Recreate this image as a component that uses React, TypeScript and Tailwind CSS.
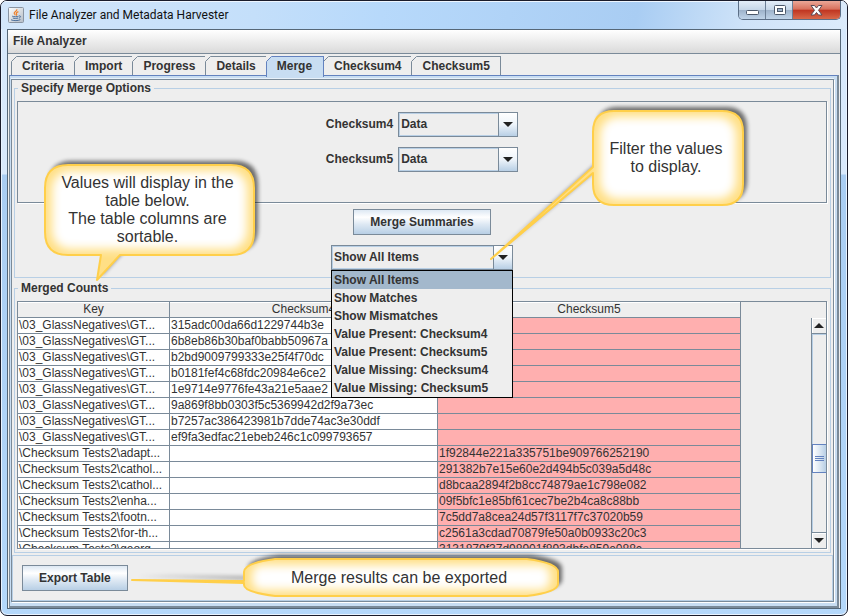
import React from "react";

const tabs = ["Criteria", "Import", "Progress", "Details", "Merge", "Checksum4", "Checksum5"];

const filters = [
  "Show All Items",
  "Show Matches",
  "Show Mismatches",
  "Value Present: Checksum4",
  "Value Present: Checksum5",
  "Value Missing: Checksum4",
  "Value Missing: Checksum5",
];

const glass = "\\03_GlassNegatives\\GT...";
const tests = "\\Checksum Tests2\\";

const rows: [string, string, string][] = [
  [glass, "315adc00da66d1229744b3e", ""],
  [glass, "6b8eb86b30baf0babb50967a", ""],
  [glass, "b2bd9009799333e25f4f70dc", ""],
  [glass, "b0181fef4c68fdc20984e6ce2", ""],
  [glass, "1e9714e9776fe43a21e5aae2", ""],
  [glass, "9a869f8bb0303f5c5369942d2f9a73ec", ""],
  [glass, "b7257ac386423981b7dde74ac3e30ddf", ""],
  [glass, "ef9fa3edfac21ebeb246c1c099793657", ""],
  [tests + "adapt...", "", "1f92844e221a335751be909766252190"],
  [tests + "cathol...", "", "291382b7e15e60e2d494b5c039a5d48c"],
  [tests + "cathol...", "", "d8bcaa2894f2b8cc74879ae1c798e082"],
  [tests + "enha...", "", "09f5bfc1e85bf61cec7be2b4ca8c88bb"],
  [tests + "footn...", "", "7c5dd7a8cea24d57f3117f7c37020b59"],
  [tests + "for-th...", "", "c2561a3cdad70879fe50a0b0933c20c3"],
  [tests + "georg...", "", "3131879f37d98901f893dbfa859e088c"],
];

function JavaIcon() {
  return (
    <svg width="16" height="16" viewBox="0 0 16 16" aria-hidden="true">
      <defs>
        <linearGradient id="java-bg" x1="0" y1="0" x2="1" y2="1">
          <stop offset="0" stopColor="#ffffff" />
          <stop offset="1" stopColor="#b4bcc6" />
        </linearGradient>
      </defs>
      <rect x="0.5" y="0.5" width="15" height="15" rx="1" fill="url(#java-bg)" stroke="#8a95a3" />
      <path d="M8.8 2.2C9.4 4 5.6 4.8 6.2 6.4c.3.8 1 1 1 1.8M10.4 4.6C8.2 5.4 8 6.4 8.6 7.2c.4.6.1 1-.4 1.4" fill="none" stroke="#f0802a" strokeWidth="1.2" />
      <path d="M4.2 9.2c1.6.7 5 .7 6.4 0M4.8 11c1.400.6 4 .6 5.200 0M3 12.800c2.400 1.200 7.600 1.100 9.400-.2M11 9c2-.6 2.200 1.400-.2 2.200" fill="none" stroke="#4b6f9c" />
    </svg>
  );
}

function Arrow({ up = false }: { up?: boolean }) {
  return (
    <svg width="10" height="5" viewBox="0 0 10 5" aria-hidden="true">
      <path d={up ? "M0 5 5 0l5 5z" : "M0 0h10L5 5z"} fill="#222" />
    </svg>
  );
}

function Combo({ id, options, wide = false }: { id: string; options: string[]; wide?: boolean }) {
  return (
    <div className={wide ? "relative w-[182px]" : "relative w-[120px]"}>
      <select
        id={id}
        aria-label={wide ? "Filter" : undefined}
        className="block h-[25px] w-full appearance-none border border-[#7a8a99] bg-[#eee] pl-[2px] pr-5 font-bold shadow-[inset_1px_1px_0_#b8cfe5,inset_0_-1px_0_#b8cfe5] outline-none"
      >
        {options.map((o) => (
          <option key={o}>{o}</option>
        ))}
      </select>
      <span className="pointer-events-none absolute inset-y-0 right-0 flex w-5 items-center justify-center border border-[#7a8a99] bg-linear-to-b from-white via-[#eef4fa] to-[#b8cfe5]">
        <Arrow />
      </span>
    </div>
  );
}

function PushButton({ children }: { children: React.ReactNode }) {
  return (
    <button className="h-[26px] border border-[#7a8a99] bg-[linear-gradient(#dde8f3,#ffffff_30%,#dde8f3_60%,#b8cfe5)] px-4 font-bold">
      {children}
    </button>
  );
}

function TabStrip() {
  return (
    <div role="tablist" className="flex h-[21px] items-start pl-[3px] pt-[2px]">
      {tabs.map((t, i) => {
        const selected = t === "Merge";
        const last = i === tabs.length - 1;
        const tone = selected
          ? "border-[#6382bf] border-r bg-[#c8ddf2] -mr-px z-20 h-[21px] pb-[2px] pr-[11px]"
          : "border-[#7a8a99] h-[19px] pr-[10px]";
        return (
          <button
            key={t}
            role="tab"
            aria-selected={selected}
            className={`relative border-l border-t pl-[10px] font-bold ${tone} ${last ? "border-r" : ""}`}
          >
            {t}
            <svg className="absolute -left-px -top-px" width="6" height="6" viewBox="0 0 6 6" aria-hidden="true">
              <path d="M0 0h6L0 6z" fill="#eee" />
              <path d="M0.500 5.500 5.500 0.500" stroke={selected ? "#6382bf" : "#7a8a99"} />
            </svg>
          </button>
        );
      })}
    </div>
  );
}

function WindowButtons() {
  return (
    <div className="flex h-[19px] overflow-hidden rounded-b-[5px] border border-t-0 border-[#5b6e86]">
      <button aria-label="Minimize" className="flex w-[27px] items-center justify-center border-r border-[#6c7f96] bg-[linear-gradient(#e3edf8,#c6d6e8_48%,#9db2ca_50%,#bfd3e8)]">
        <svg width="13" height="13" viewBox="0 0 13 13" aria-hidden="true">
          <rect x="0.500" y="6.500" width="12" height="4" rx="1" fill="#fff" stroke="#4c586a" />
        </svg>
      </button>
      <button aria-label="Maximize" className="flex w-[27px] items-center justify-center border-r border-[#6c7f96] bg-[linear-gradient(#e3edf8,#c6d6e8_48%,#9db2ca_50%,#bfd3e8)]">
        <svg width="13" height="13" viewBox="0 0 13 13" aria-hidden="true">
          <rect x="1.500" y="1.500" width="11" height="9" rx="1" fill="#fff" stroke="#4c586a" />
          <rect x="4.500" y="4.500" width="5" height="3" fill="#9db2ca" stroke="#4c586a" />
        </svg>
      </button>
      <button aria-label="Close" className="flex w-[47px] items-center justify-center bg-[linear-gradient(#eba797,#d8705c_46%,#bf3420_50%,#d8694a)]">
        <svg width="13" height="11" viewBox="0 0 13 11" aria-hidden="true">
          <path d="M1 .5h3.500l2 2.500 2-2.500H12L8.500 5.300 12 10H8.500l-2-2.500-2 2.500H1l3.500-4.700z" fill="#fff" stroke="#5a4a55" strokeLinejoin="round" />
        </svg>
      </button>
    </div>
  );
}

function ScrollBar() {
  return (
    <div className="flex w-[15px] flex-col border-l border-[#7a8a99] bg-[#eee]">
      <button aria-label="Scroll up" className="flex h-4 items-center justify-center border-b border-[#7a8a99] shadow-[inset_1px_1px_0_#fff]">
        <Arrow up />
      </button>
      <div className="flex flex-1 flex-col border-l border-t border-[#b8cfe5]">
        <div className="flex-[110]" />
        <div className="-ml-px flex h-[29px] flex-col items-center justify-center gap-px border-y border-l border-[#6382bf] bg-linear-to-r from-white via-[#dde8f3] to-[#b8cfe5]">
          <span className="h-px w-[9px] bg-[#6382bf]" />
          <span className="h-px w-[9px] bg-[#6382bf]" />
          <span className="h-px w-[9px] bg-[#6382bf]" />
        </div>
        <div className="flex-[59]" />
      </div>
      <button aria-label="Scroll down" className="flex h-4 items-center justify-center border-t border-[#7a8a99] shadow-[inset_1px_1px_0_#fff]">
        <Arrow />
      </button>
    </div>
  );
}

function Balloon({
  id,
  width,
  height,
  shape,
  glow,
  className,
}: {
  id: string;
  width: number;
  height: number;
  shape: string;
  glow: React.ReactNode;
  className: string;
}) {
  return (
    <svg className={`absolute overflow-visible ${className}`} width={width} height={height} viewBox={`0 0 ${width} ${height}`} aria-hidden="true">
      <defs>
        <filter id={`${id}-shadow`} x="-10%" y="-30%" width="120%" height="160%">
          <feGaussianBlur stdDeviation="2" />
        </filter>
        <filter id={`${id}-glow`} x="-10%" y="-30%" width="120%" height="160%">
          <feGaussianBlur stdDeviation="5" />
        </filter>
        <clipPath id={`${id}-clip`}>
          <path d={shape} />
        </clipPath>
      </defs>
      <path d={shape} fill="#000" opacity="0.55" transform="translate(4 -4)" filter={`url(#${id}-shadow)`} />
      <path d={shape} fill="#ffdf85" />
      <g clipPath={`url(#${id}-clip)`}>
        <g fill="#fff" filter={`url(#${id}-glow)`}>{glow}</g>
      </g>
      <path d={shape} fill="none" stroke="#ffcf4a" strokeWidth="2" strokeLinejoin="round" />
    </svg>
  );
}

function Callouts() {
  return (
    <div className="pointer-events-none absolute inset-0 z-40 text-center text-[16px] leading-[18px] text-[#333]">
      <Balloon
        id="values"
        className="left-[43px] top-[163px]"
        width={211}
        height={118}
        shape="M24 1H187Q210 1 210 24V68Q210 91 187 91H76L53 116 57 91H24Q1 91 1 68V24Q1 1 24 1Z"
        glow={<rect x="8" y="7" width="195" height="78" rx="18" />}
      />
      <p className="absolute left-[43px] top-[173px] w-[207px]">
        Values will display in the
        <br />
        table below.
        <br />
        The table columns are
        <br />
        sortable.
      </p>
      <Balloon
        id="filter"
        className="left-[489px] top-[109px]"
        width={254}
        height={150}
        shape="M124 1H232Q253 1 253 22V74Q253 95 232 95H124Q103 95 103 74V63L1 149 103 57V22Q103 1 124 1Z"
        glow={<rect x="110" y="7" width="136" height="82" rx="18" />}
      />
      <p className="absolute left-[592px] top-[139px] w-[146px]">
        Filter the values
        <br />
        to display.
      </p>
      <Balloon
        id="export"
        className="left-[130px] top-[557px]"
        width={428}
        height={40}
        shape="M144 1H396Q427 5 427 14V26Q427 34 396 38H144Q113 34 113 27V25L1 22 113 23V14Q113 5 144 1Z"
        glow={<rect x="121" y="7" width="298" height="25" rx="9" />}
      />
      <p className="absolute left-[243px] top-[568px] w-[310px]">Merge results can be exported</p>
    </div>
  );
}

export default function App() {
  return (
    <div className="relative flex h-screen min-h-[560px] flex-col overflow-hidden rounded-[7px] border border-[#1a1c2b] bg-[linear-gradient(#d6e8fb_0px,#d9e9fb_173px,#a9cdf2_174px,#b4d8fb)] px-[6px] pb-[6px] font-['Liberation_Sans',Arial,sans-serif] text-[12px] leading-[15px] text-[#333] shadow-[inset_0_0_0_1px_#e8f3ff]">
      <header className="-mx-[6px] flex h-7 items-start bg-[linear-gradient(100deg,#d3e6fa,#c4dffa_30%,#b7d9fb_45%,#a9cdf3_75%,#cfe3f8_88%,#dcebfb)] pl-[7px] pr-[6px] shadow-[inset_0_1px_0_#eef6ff]">
        <div className="flex h-7 flex-1 items-center gap-[5px]">
          <JavaIcon />
          <h1 className="font-[Roboto,sans-serif] text-[12px] text-[#111]">File Analyzer and Metadata Harvester</h1>
        </div>
        <WindowButtons />
      </header>

      <div className="flex min-h-0 flex-1 flex-col border border-[#566777] bg-[#eee]">
        <nav className="flex h-6 items-center border-b border-[#7a8a99] bg-linear-to-b from-white to-[#dadada] pl-[5px]">
          <button className="font-bold">File Analyzer</button>
        </nav>

        <TabStrip />

        <main className="mx-px flex min-h-0 flex-1 flex-col border border-r-2 border-b-2 border-[#7a8a99] border-t-[#6382bf] bg-[#c8ddf2] pb-[4px] pr-[3px] pl-px pt-[3px]">
          <div className="flex min-h-0 flex-1 flex-col border border-[#7a8a99] bg-[#eee] pt-px shadow-[1px_1px_0_#fff,0_-1px_0_#e8f1fa]">
            <fieldset className="mx-[2px] flex flex-col items-stretch border border-[#b8cfe5] pb-[7px] pl-[2px] pr-[3px]">
              <legend className="ml-px px-[3px] font-bold">Specify Merge Options</legend>
              <div className="mt-[5px] flex h-[102px] flex-col items-center gap-[10px] border border-[#7a8a99] pt-[10px] shadow-[1px_1px_0_#fff]">
                <div className="flex items-center gap-[5px]">
                  <label htmlFor="sum4" className="font-bold">Checksum4</label>
                  <Combo id="sum4" options={["Data"]} />
                </div>
                <div className="flex items-center gap-[5px]">
                  <label htmlFor="sum5" className="font-bold">Checksum5</label>
                  <Combo id="sum5" options={["Data"]} />
                </div>
              </div>
              <div className="mt-[6px] flex flex-col items-center gap-[10px]">
                <PushButton>Merge Summaries</PushButton>
                <div className="relative">
                  <Combo id="filter-items" options={filters} wide />
                  <ul role="listbox" aria-label="Filter choices" className="absolute inset-x-0 top-full z-30 border border-black bg-[#eee] font-bold leading-[18px]">
                    {filters.map((f, i) => (
                      <li key={f} role="option" aria-selected={i === 0} className={i === 0 ? "bg-[#a3b8cc] pl-[2px]" : "pl-[2px]"}>
                        {f}
                      </li>
                    ))}
                  </ul>
                </div>
              </div>
            </fieldset>

            <fieldset className="mx-[2px] mt-[3px] flex min-h-0 flex-1 flex-col border border-[#b8cfe5] pb-[3px] pl-[2px] pr-[3px]">
              <legend className="ml-px px-[3px] font-bold">Merged Counts</legend>
              <div className="mt-[5px] flex min-h-0 flex-1 border border-[#7a8a99] shadow-[1px_1px_0_#fff]">
                <div className="min-h-0 flex-1 overflow-hidden">
                  <table className="w-[723px] table-fixed border-separate border-spacing-0">
                    <thead>
                      <tr className="h-4 shadow-[inset_0_1px_0_#fff]">
                        <th className="w-[152px] border-b border-r border-[#7a8a99] p-0 font-normal">Key</th>
                        <th className="w-[268px] border-b border-r border-[#7a8a99] p-0 font-normal">Checksum4</th>
                        <th className="w-[303px] border-b border-r border-[#7a8a99] p-0 font-normal">Checksum5</th>
                      </tr>
                    </thead>
                    <tbody>
                      {rows.map(([key, a, b], i) => (
                        <tr key={i} className="h-4 whitespace-nowrap">
                          <td className="overflow-hidden border-b border-r border-[#7a8a99] bg-white p-0 pl-px">{key}</td>
                          <td className="overflow-hidden border-b border-r border-[#7a8a99] bg-white p-0 pl-px">{a}</td>
                          <td className="overflow-hidden border-b border-r border-[#7a8a99] bg-[#ffafaf] p-0 pl-px">{b}</td>
                        </tr>
                      ))}
                    </tbody>
                  </table>
                </div>
                <div className="flex pt-4">
                  <ScrollBar />
                </div>
              </div>
            </fieldset>

            <footer className="mt-[2px] flex h-[46px] items-center border border-[#b8cfe5] pl-[9px]">
              <PushButton>Export Table</PushButton>
            </footer>
          </div>
        </main>
      </div>

      <Callouts />
    </div>
  );
}
